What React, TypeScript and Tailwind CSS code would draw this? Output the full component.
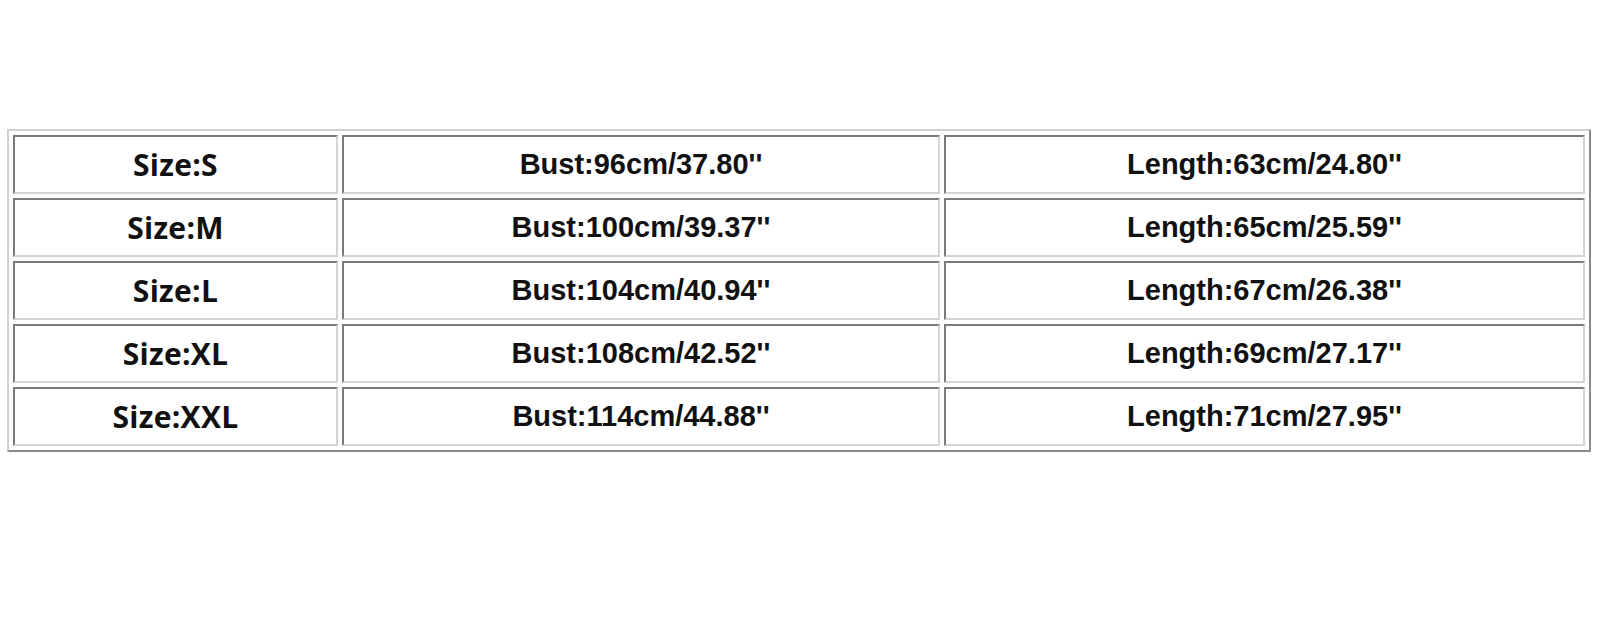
const rows = [
  { size: 'Size:S', bust: "Bust:96cm/37.80''", length: "Length:63cm/24.80''" },
  { size: 'Size:M', bust: "Bust:100cm/39.37''", length: "Length:65cm/25.59''" },
  { size: 'Size:L', bust: "Bust:104cm/40.94''", length: "Length:67cm/26.38''" },
  { size: 'Size:XL', bust: "Bust:108cm/42.52''", length: "Length:69cm/27.17''" },
  { size: 'Size:XXL', bust: "Bust:114cm/44.88''", length: "Length:71cm/27.95''" },
];

const cell =
  'h-[59px] p-0 text-center align-middle font-bold text-[#111] border-2 border-t-[#7a7a7a] border-l-[#7a7a7a] border-b-[#d4d4d4] border-r-[#d4d4d4]';

export default function App() {
  return (
    <div className="w-[1600px] h-[633px] bg-white pt-[129px] pl-[7px]">
      <table className="w-[1584px] table-fixed border-separate border-spacing-[4px] border-2 border-t-[#d0d0d0] border-l-[#d0d0d0] border-b-[#8a8a8a] border-r-[#8a8a8a]">
        <colgroup>
          <col className="w-[325px]" />
          <col className="w-[598px]" />
          <col className="w-[641px]" />
        </colgroup>
        <tbody>
          {rows.map((r) => (
            <tr key={r.size}>
              <td className={`${cell} font-['Open_Sans',sans-serif] text-[30px] tracking-[0.3px]`}>{r.size}</td>
              <td className={`${cell} font-['Liberation_Sans',Arial,sans-serif] text-[29px]`}>{r.bust}</td>
              <td className={`${cell} font-['Liberation_Sans',Arial,sans-serif] text-[29px]`}>{r.length}</td>
            </tr>
          ))}
        </tbody>
      </table>
    </div>
  );
}
